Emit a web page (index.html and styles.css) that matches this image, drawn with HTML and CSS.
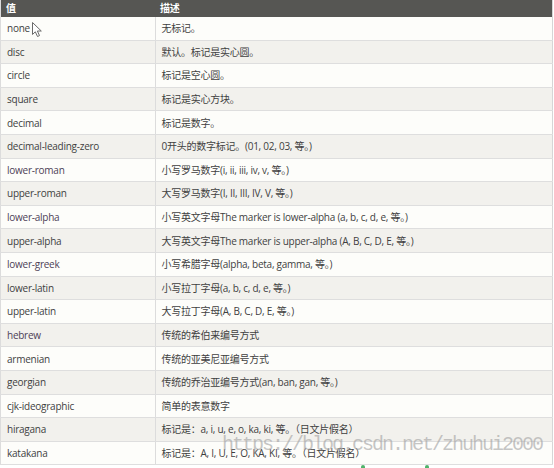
FILE: index.html
```html
<!DOCTYPE html>
<html lang="zh-CN">
<head>
<meta charset="utf-8">
<title>list-style-type</title>
<link rel="stylesheet" href="styles.css">
</head>
<body>
<div class="wrap">
<table class="ref">
<thead>
<tr><th class="c1">值</th><th class="c2">描述</th></tr>
</thead>
<tbody>
<tr><td>none</td><td>无标记。</td></tr>
<tr><td>disc</td><td>默认。标记是实心圆。</td></tr>
<tr><td>circle</td><td>标记是空心圆。</td></tr>
<tr><td>square</td><td>标记是实心方块。</td></tr>
<tr><td>decimal</td><td>标记是数字。</td></tr>
<tr><td>decimal-leading-zero</td><td>0开头的数字标记。(01, 02, 03, 等。)</td></tr>
<tr><td class="v">lower-roman</td><td>小写罗马数字(i, ii, iii, iv, v, 等。)</td></tr>
<tr><td>upper-roman</td><td>大写罗马数字(I, II, III, IV, V, 等。)</td></tr>
<tr><td class="v">lower-alpha</td><td>小写英文字母The marker is lower-alpha (a, b, c, d, e, 等。)</td></tr>
<tr><td>upper-alpha</td><td>大写英文字母The marker is upper-alpha (A, B, C, D, E, 等。)</td></tr>
<tr><td class="v">lower-greek</td><td>小写希腊字母(alpha, beta, gamma, 等。)</td></tr>
<tr><td>lower-latin</td><td>小写拉丁字母(a, b, c, d, e, 等。)</td></tr>
<tr><td>upper-latin</td><td>大写拉丁字母(A, B, C, D, E, 等。)</td></tr>
<tr><td class="v">hebrew</td><td>传统的希伯来编号方式</td></tr>
<tr><td>armenian</td><td>传统的亚美尼亚编号方式</td></tr>
<tr><td>georgian</td><td>传统的乔治亚编号方式(an, ban, gan, 等。)</td></tr>
<tr><td>cjk-ideographic</td><td>简单的表意数字</td></tr>
<tr><td>hiragana</td><td>标记是：a, i, u, e, o, ka, ki, 等。（日文片假名）</td></tr>
<tr><td>katakana</td><td>标记是：A, I, U, E, O, KA, KI, 等。（日文片假名）</td></tr>
</tbody>
</table>
<svg class="cursor" width="13" height="17" viewBox="0 0 13 17" aria-hidden="true">
<path d="M1.5 1.5 L1.5 13.5 L4.3 10.8 L6.5 15.5 L8.5 14.6 L6.4 10 L10.3 10 Z" fill="#fff" stroke="#6a6a6a" stroke-width="1" stroke-linejoin="round"/>
</svg>
<div class="mark">https://blog.csdn.net/zhuhui2000</div>
<div class="bits"><span class="bit b1"></span><span class="bit b2"></span></div>
</div>
</body>
</html>
```

FILE: styles.css
```css
html, body {
  margin: 0;
  padding: 0;
  background: #ffffff;
}
.wrap {
  position: relative;
  width: 554px;
  height: 468px;
  overflow: hidden;
}
.ref {
  border-collapse: collapse;
  width: 553px;
  table-layout: fixed;
  font-family: "Open Sans", "Noto Sans CJK SC", sans-serif;
  font-size: 10px;
  letter-spacing: -0.25px;
  color: #3f3f3f;
  border-left: 1px solid #dcdcdc;
  border-right: 1px solid #d6d6d6;
}
.ref th {
  background: #565653;
  color: #ffffff;
  font-weight: bold;
  text-align: left;
  height: 17px;
  padding: 0 0 0 5px;
  font-size: 10px;
  line-height: 17px;
}
.ref th.c1 { width: 149px; }
.ref td {
  height: 22.6px;
  padding: 0 0 0 6px;
  border-bottom: 1px solid #dedede;
  line-height: 14px;
  white-space: nowrap;
}
.ref td + td {
  border-left: 1px solid #dcdcdc;
}
.ref tbody tr:nth-child(odd) td { background: #fdfdfa; }
.ref tbody tr:nth-child(even) td { background: #f2f1ed; }
.ref td.v { color: #4d3f57; }
.cursor {
  position: absolute;
  left: 31px;
  top: 21px;
}
.mark {
  position: absolute;
  left: 222px;
  top: 433px;
  font-family: "Liberation Mono", monospace;
  font-size: 20px;
  letter-spacing: -2px;
  color: rgba(160, 160, 160, 0.6);
  white-space: nowrap;
}
.bits {
  position: absolute;
  left: 0;
  top: 465px;
}
.bit {
  position: absolute;
  top: 0;
  width: 4px;
  height: 3px;
  border-radius: 2px 2px 0 0;
  background: #4fb36a;
}
.b1 { left: 361px; }
.b2 { left: 425px; }
```
